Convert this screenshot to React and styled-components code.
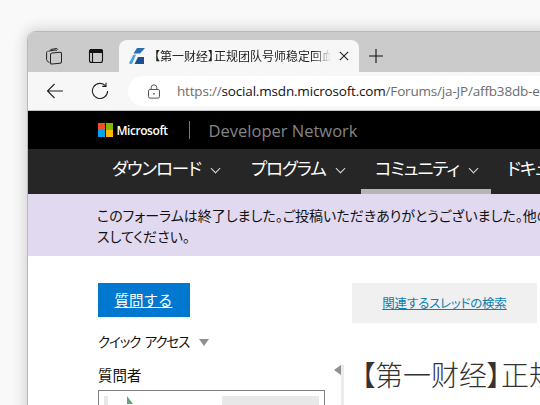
import React from 'react'
import styled, { createGlobalStyle } from 'styled-components'

const jp = `"Noto Sans CJK JP", "Open Sans", sans-serif`

const GlobalStyle = createGlobalStyle`
    html, body {
        margin: 0;
        height: 405px;
        overflow: hidden;
        background: #f9f9f9;
    }
`

function App() {
    return (
        <Page>
            <GlobalStyle />
            <BrowserWindow>
                <TabStrip>
                    <StripIcon>
                        <svg width="20" height="20" viewBox="0 0 20 20" fill="none" stroke="#222" strokeWidth="1">
                            <path d="M6.5 3.5 12 2.6c1-.1 1.6.3 1.8 1" />
                            <path d="M4.3 5.2 11 4c1-.1 1.6.3 1.8 1" />
                            <path d="M2.6 6.4c0-.6.3-1 1-1.1M2.6 6.4v7c0 1 .4 1.7 1.3 2.2l1.6 1" />
                            <rect x="6.5" y="6.5" width="11" height="11" rx="1.6" transform="skewY(-6) translate(0 1.4)" />
                        </svg>
                    </StripIcon>
                    <StripIcon>
                        <svg width="20" height="20" viewBox="0 0 20 20" fill="none" stroke="#111" strokeWidth="1.1">
                            <rect x="3.5" y="3.5" width="13" height="13" rx="2" />
                            <path d="M5.5 3.5h9a2 2 0 0 1 2 2v1h-13v-1a2 2 0 0 1 2-2z" fill="#111" />
                            <path d="M6.5 6.5v10" />
                        </svg>
                    </StripIcon>
                    <ActiveTab>
                        <svg width="16" height="16" viewBox="0 0 16 16">
                            <path d="M8 0h8l-5 5.5H4.5z" fill="#2a6fb5" />
                            <path d="M0 15 4 7.5c.8-1 2-1.2 3-.8L3 16H1z" fill="#4aa0dc" />
                            <path d="M9 9h6v7H5.5z" fill="#1d4f8f" />
                        </svg>
                        <TabTitle>【第一财经】正规团队号师稳定回血</TabTitle>
                        <CloseButton>
                            <svg width="10" height="10" viewBox="0 0 10 10" stroke="#222" strokeWidth="1.1">
                                <path d="M.8.8l8.4 8.4M9.2.8.8 9.2" />
                            </svg>
                        </CloseButton>
                    </ActiveTab>
                    <NewTab>
                        <svg width="16" height="16" viewBox="0 0 16 16" stroke="#111" strokeWidth="1.1">
                            <path d="M8 1v14M1 8h14" />
                        </svg>
                    </NewTab>
                </TabStrip>
                <Toolbar>
                    <ToolIcon>
                        <svg width="18" height="18" viewBox="0 0 18 18" fill="none" stroke="#222" strokeWidth="1.1">
                            <path d="M17 9H1.5M8.5 2 1.5 9l7 7" />
                        </svg>
                    </ToolIcon>
                    <ToolIcon>
                        <svg width="18" height="18" viewBox="0 0 18 18" fill="none" stroke="#222" strokeWidth="1.1">
                            <path d="M14.6 3.8A7.6 7.6 0 1 0 16.6 9" />
                            <path d="M15 .8v3.6h-3.8" />
                        </svg>
                    </ToolIcon>
                    <AddressBar>
                        <svg width="14" height="15" viewBox="0 0 14 15" fill="none" stroke="#555" strokeWidth="1">
                            <rect x="1.5" y="5.5" width="11" height="8.6" rx="1.4" />
                            <path d="M4.2 5.5V3.6a2.8 2.8 0 0 1 5.6 0v1.9" />
                            <circle cx="7" cy="9.8" r=".9" fill="#555" stroke="none" />
                        </svg>
                        <Url>
                            https://<UrlHost>social.msdn.microsoft.com</UrlHost>/Forums/ja-JP/affb38db-e
                        </Url>
                    </AddressBar>
                </Toolbar>
                <BrandBar>
                    <MsLogo>
                        <i style={{ background: '#f25022' }} />
                        <i style={{ background: '#7fba00' }} />
                        <i style={{ background: '#00a4ef' }} />
                        <i style={{ background: '#ffb900' }} />
                    </MsLogo>
                    <MsName>Microsoft</MsName>
                    <BrandDivider />
                    <SiteName>Developer Network</SiteName>
                </BrandBar>
                <NavBar>
                    <NavItem $width={139}>ダウンロード<Chevron /></NavItem>
                    <NavItem $width={124}>プログラム<Chevron /></NavItem>
                    <NavItem $width={130} $active>コミュニティ<Chevron /></NavItem>
                    <NavItem $width={100} $pad={16}>ドキュメント</NavItem>
                </NavBar>
                <Notice>
                    このフォーラムは終了しました。ご投稿いただきありがとうございました。他の
                    <br />
                    スしてください。
                </Notice>
                <Content>
                    <Sidebar>
                        <AskButton href="#">質問する</AskButton>
                        <QuickAccess>クイック アクセス<DownMark /></QuickAccess>
                        <SideHeading>質問者</SideHeading>
                        <AskerCard>
                            <AskerInner>
                                <AskerAvatar>
                                    <svg width="8" height="8" viewBox="0 0 8 8">
                                        <path d="M1 0l6 8H1z" fill="#5aa777" />
                                    </svg>
                                </AskerAvatar>
                            </AskerInner>
                        </AskerCard>
                    </Sidebar>
                    <MainColumn>
                        <SearchBox>
                            <a href="#">関連するスレッドの検索</a>
                        </SearchBox>
                        <ThreadHead>
                            <CollapseMark />
                            <ThreadTitle>【第一财经】正规团队号师稳定回血</ThreadTitle>
                        </ThreadHead>
                    </MainColumn>
                </Content>
            </BrowserWindow>
        </Page>
    )
}

const Page = styled.div`
    width: 540px;
    height: 405px;
    padding: 32px 0 0 28px;
    box-sizing: border-box;
    overflow: hidden;
`
const BrowserWindow = styled.div`
    width: 560px;
    height: 400px;
    background: #fff;
    border-radius: 8px 0 0 0;
    overflow: hidden;
    box-shadow: 0 0 0 1px #b9b9b9, 0 0 14px 3px rgba(0, 0, 0, 0.16);
`

// Browser chrome

const TabStrip = styled.div`
    display: flex;
    align-items: flex-end;
    height: 40px;
    background: #cbcbcb;
`
const StripIcon = styled.div`
    display: flex;
    align-items: center;
    justify-content: center;
    flex: none;
    width: 42px;
    height: 32px;
    &:first-child {
        margin-left: 5px;
    }
    &:nth-child(2) {
        margin-right: 2px;
    }
`
const ActiveTab = styled.div`
    display: flex;
    align-items: center;
    flex: none;
    box-sizing: border-box;
    width: 240px;
    height: 32px;
    padding: 0 10px 0 10px;
    background: #f7f7f7;
    border-radius: 8px 8px 0 0;
    svg {
        flex: none;
    }
`
const TabTitle = styled.span`
    flex: 1;
    margin-left: 9px;
    overflow: hidden;
    white-space: nowrap;
    font: 12px/32px ${jp};
    font-feature-settings: "palt";
    color: #222;
    -webkit-mask-image: linear-gradient(to right, #000 90%, transparent);
    mask-image: linear-gradient(to right, #000 90%, transparent);
`
const CloseButton = styled.span`
    display: flex;
    flex: none;
    margin-left: 8px;
`
const NewTab = styled.div`
    display: flex;
    align-items: center;
    justify-content: center;
    flex: none;
    width: 34px;
    height: 32px;
`
const Toolbar = styled.div`
    display: flex;
    align-items: center;
    box-sizing: border-box;
    height: 39px;
    padding-left: 18px;
    background: #f7f7f7;
    border-bottom: 1px solid #c4c4c4;
`
const ToolIcon = styled.div`
    display: flex;
    justify-content: center;
    flex: none;
    width: 18px;
    margin-right: 27px;
    &:nth-child(2) {
        margin-right: 19px;
    }
`
const AddressBar = styled.div`
    display: flex;
    align-items: center;
    flex: 1;
    height: 30px;
    padding-left: 19px;
    background: #fff;
    border-radius: 15px 0 0 15px;
`
const Url = styled.div`
    margin-left: 16px;
    white-space: nowrap;
    font: 13.5px/30px "Open Sans", sans-serif;
    letter-spacing: -0.18px;
    color: #6d6d6d;
`
const UrlHost = styled.span`
    color: #111;
`

// Site header

const BrandBar = styled.div`
    display: flex;
    align-items: center;
    height: 38px;
    padding-left: 70px;
    background: #000;
`
const MsLogo = styled.div`
    display: grid;
    grid-template-columns: 7px 7px;
    grid-auto-rows: 6.5px;
    gap: 0.5px;
    i {
        display: block;
    }
`
const MsName = styled.span`
    margin-left: 4px;
    font: 600 12px "Open Sans", sans-serif;
    letter-spacing: -0.45px;
    color: #fff;
`
const BrandDivider = styled.span`
    width: 1px;
    height: 18px;
    margin: 0 19px 0 21px;
    background: #777;
`
const SiteName = styled.span`
    font: 16.5px "Open Sans", sans-serif;
    color: #858585;
`
const NavBar = styled.nav`
    display: flex;
    height: 45px;
    padding-left: 70px;
    background: #262626;
    white-space: nowrap;
`
const NavItem = styled.div`
    display: flex;
    align-items: center;
    flex: none;
    box-sizing: border-box;
    width: ${props => props.$width}px;
    height: 45px;
    padding-left: ${props => props.$pad || 14}px;
    padding-bottom: 3px;
    font: 17.5px ${jp};
    font-feature-settings: "palt";
    letter-spacing: -1.1px;
    color: #fff;
    border-bottom: 5px solid ${props => (props.$active ? '#b5b5b5' : 'transparent')};
`
const Chevron = styled.span`
    width: 6px;
    height: 6px;
    margin: 2px 0 0 11px;
    border-right: 1px solid #ddd;
    border-bottom: 1px solid #ddd;
    transform: rotate(45deg);
`
const Notice = styled.div`
    box-sizing: border-box;
    height: 62px;
    padding: 11px 0 0 69px;
    background: #e1d9f0;
    font: 14px/21px ${jp};
    font-feature-settings: "palt";
    white-space: nowrap;
    color: #111;
`

// Page body

const Content = styled.div`
    display: flex;
    padding: 27px 0 0 70px;
`
const Sidebar = styled.aside`
    flex: none;
    width: 227px;
`
const AskButton = styled.a`
    display: block;
    box-sizing: border-box;
    width: 92px;
    height: 34px;
    padding-right: 1px;
    background: #0078d0;
    font: 14.5px/33px ${jp};
    text-align: center;
    color: #fff;
`
const QuickAccess = styled.div`
    display: flex;
    align-items: center;
    margin-top: 13px;
    font: 13.5px/22px ${jp};
    font-feature-settings: "palt";
    letter-spacing: -1.2px;
    word-spacing: 3px;
    white-space: pre;
    color: #111;
`
const DownMark = styled.span`
    width: 0;
    height: 0;
    margin: 3px 0 0 10px;
    border-style: solid;
    border-width: 7px 5px 0;
    border-color: #8f8f8f transparent transparent;
`
const SideHeading = styled.div`
    margin-top: 12px;
    font: 14.5px/22px ${jp};
    color: #111;
`
const AskerCard = styled.div`
    box-sizing: border-box;
    height: 40px;
    margin-top: 4px;
    padding: 5px;
    border: 1px solid #808080;
`
const AskerInner = styled.div`
    height: 40px;
    padding-left: 4px;
    background: #e8e8e8;
`
const AskerAvatar = styled.div`
    width: 114px;
    height: 40px;
    padding-left: 18px;
    box-sizing: border-box;
    background: #fff;
    svg {
        display: block;
    }
`
const MainColumn = styled.main`
    flex: none;
    width: 205px;
    margin-left: 9px;
`
const SearchBox = styled.div`
    display: flex;
    align-items: center;
    justify-content: center;
    box-sizing: border-box;
    width: 185px;
    height: 40px;
    margin-left: 18px;
    padding-bottom: 2px;
    background: #f0f0f0;
    a {
        font: 12.5px ${jp};
        font-feature-settings: "palt";
        letter-spacing: -0.2px;
        color: #0a7fb0;
    }
`
const ThreadHead = styled.div`
    display: flex;
    height: 60px;
    margin-top: 42px;
`
const CollapseMark = styled.span`
    flex: none;
    align-self: flex-start;
    width: 0;
    height: 0;
    border-style: solid;
    border-width: 5px 7px 5px 0;
    border-color: transparent #8f8f8f transparent transparent;
`
const ThreadTitle = styled.h1`
    margin: 0;
    padding-left: 17px;
    border-left: 3px solid #ebebeb;
    font: 300 28px/18px "Noto Sans CJK SC", sans-serif;
    font-feature-settings: "palt";
    white-space: nowrap;
    color: #333;
`

export default App
